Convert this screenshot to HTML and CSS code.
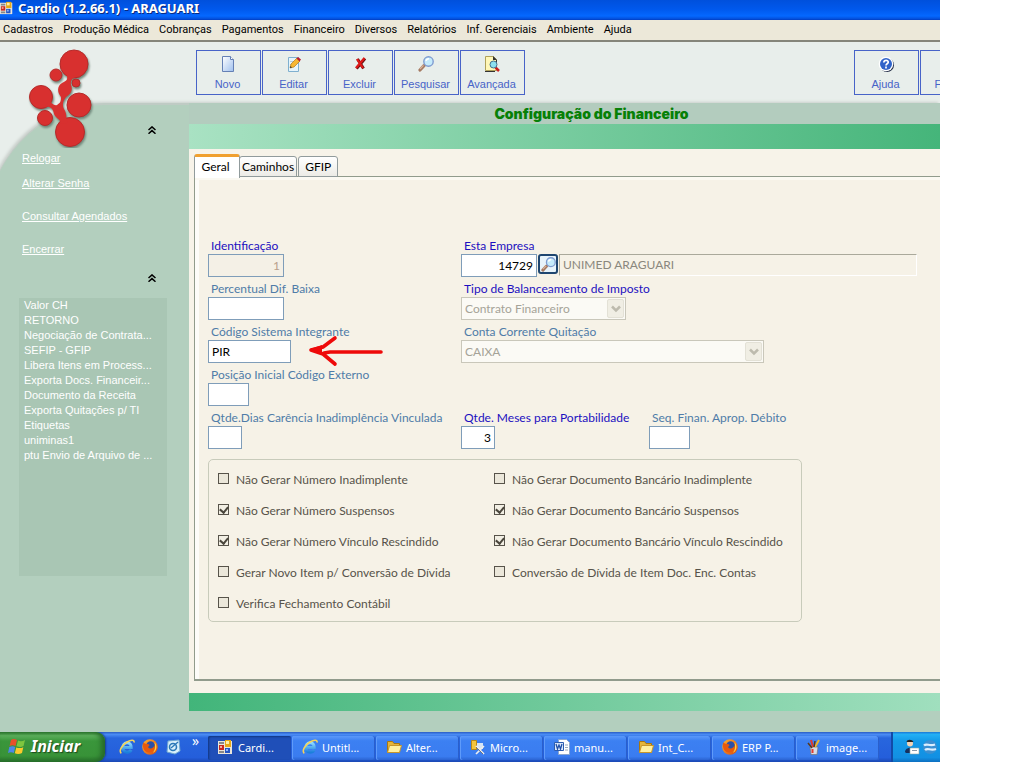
FILE: index.html
```html
<!DOCTYPE html>
<html lang="pt-BR">
<head>
<meta charset="utf-8">
<title>Cardio (1.2.66.1) - ARAGUARI</title>
<link rel="stylesheet" href="styles.css">
</head>
<body>
<svg class="defs" aria-hidden="true">
  <defs>
    <linearGradient id="foxg" x1="0" y1="0" x2="1" y2="1"><stop offset="0" stop-color="#ffb52e"/><stop offset="1" stop-color="#d9480f"/></linearGradient>
    <linearGradient id="pageg" x1="0" y1="0" x2="1" y2="1"><stop offset="0" stop-color="#fff"/><stop offset="1" stop-color="#9fc0ee"/></linearGradient>
    <linearGradient id="ieg" x1="0" y1="0" x2="0" y2="1"><stop offset="0" stop-color="#8fdcff"/><stop offset="1" stop-color="#1c7fdc"/></linearGradient>
    <symbol id="app" viewBox="0 0 16 16"><path fill="#e9e5da" d="M0 2h14v13H0z"/><path fill="#c9281f" d="M1 6h5v5H1z"/><path fill="#f5a59b" d="M2 7h2v2H2z"/><path fill="#2456c4" d="M7 9h5v5H7z"/><path fill="#8fb2f5" d="M8 10h2v2H8z"/><path fill="#e6a817" d="M7 1h6v7H7z"/><path fill="#fff0a8" d="M8 2h3v3H8z"/><path fill="#888" d="M1 12h5v2H1zM1 3h5v2H1z"/></symbol>
    <symbol id="ie" viewBox="0 0 16 16"><path fill="none" stroke="url(#ieg)" stroke-width="3" d="M4 8.6h8.2C12.300 5.500 10.500 3.800 8.200 3.800C5.600 3.800 3.700 5.900 3.700 8.600C3.700 11.300 5.700 13.200 8.200 13.200C10 13.200 11.400 12.400 12.200 11"/><path fill="none" stroke="#f5d35b" stroke-width="1.600" d="M2.300 14.300C-.5 12 3 6 8 3C12 .6 15.500.4 15 3.500"/></symbol>
    <symbol id="fox" viewBox="0 0 16 16"><circle cx="8" cy="8" r="7.800" fill="url(#foxg)"/><circle cx="8.600" cy="6.500" r="4.200" fill="#2b4fa8"/><path fill="#e8590c" d="M1.200 3.500C3 5 4.500 4.700 6.500 5.300C8.500 6 6.800 7.300 6 8C8 10.800 11.500 9.500 12.500 6C13.500 11 10 14 6.500 13.500C2.500 13 0 9 1.200 3.500z"/><path fill="#ffd43b" d="M12.500 3.500C15.500 6 15 12 11 13.800C13.500 10.500 13.500 7 12.500 3.500z"/></symbol>
    <symbol id="folder" viewBox="0 0 16 16"><path fill="#e5b53a" stroke="#a87710" d="M1.500 13.500v-11h5l1.500 2h5.500v9z"/><path fill="#fff0a0" stroke="#c7962a" d="M3.500 6.500h12l-2 7h-12z"/></symbol>
    <symbol id="lens" viewBox="0 0 16 16"><path stroke="#a57a62" stroke-width="3.200" stroke-linecap="round" d="M2 14l4-4.300"/><path stroke="#d8b49c" stroke-width="1.200" d="M2 13l3.500-3.600"/><circle cx="10.500" cy="5.500" r="4.700" fill="#c5ebfb" stroke="#7e9bd0" stroke-width="1.400"/><path fill="none" stroke="#fff" stroke-width="1.600" d="M8 5a3 3 0 0 1 3-2.300"/></symbol>
    <symbol id="chev" viewBox="0 0 8 8"><path fill="none" stroke="#000" stroke-width="1.500" d="M.5 4L4 .9L7.500 4M.5 7.700L4 4.600L7.500 7.700"/></symbol>
    <symbol id="down" viewBox="0 0 10 8"><path fill="none" stroke="#bdbbae" stroke-width="2.500" d="M1 1.500L5 5.500L9 1.500"/></symbol>
  </defs>
</svg>
<div class="desktop">
  <header class="titlebar"><svg class="i16"><use href="#app"/></svg><span>Cardio (1.2.66.1) - ARAGUARI</span></header>
  <nav class="menubar">
    <a href="#">Cadastros</a><a href="#">Produção Médica</a><a href="#">Cobranças</a><a href="#">Pagamentos</a><a href="#">Financeiro</a><a href="#">Diversos</a><a href="#">Relatórios</a><a href="#">Inf. Gerenciais</a><a href="#">Ambiente</a><a href="#">Ajuda</a>
  </nav>
  <div class="shell">
    <aside class="sidebar">
      <svg class="logo" viewBox="0 0 68 100">
        <g class="shade">
        <circle cx="46" cy="16" r="14"/><circle cx="28" cy="27" r="6"/><circle cx="48" cy="35" r="4"/><circle cx="13" cy="49" r="11.500"/><circle cx="51" cy="57" r="12"/><circle cx="17" cy="70" r="7.500"/><circle cx="42" cy="84" r="14.500"/>
        <path d="M38 26C41 32 38 33 34 35C29 38 29 44 33 49C33 54 32 55 29 57C26 58 23 55 21 52L17 59C22 58 25 60 26 66C28 71 32 70 33 76L40 75C37 71 40 67 36 61C34 57 35 53 38 49C43 46 45 42 43 37C42 33 44 30 49 28Z"/>
        </g>
      </svg>
      <button class="collapse" aria-label="Recolher menu"><svg><use href="#chev"/></svg></button>
      <nav class="links">
        <a href="#">Relogar</a><a href="#">Alterar Senha</a><a href="#" class="apart">Consultar Agendados</a><a href="#" class="apart">Encerrar</a>
      </nav>
      <button class="collapse" aria-label="Recolher lista"><svg><use href="#chev"/></svg></button>
      <ul class="recent">
        <li>Valor CH</li><li>RETORNO</li><li>Negociação de Contrata...</li><li>SEFIP - GFIP</li><li>Libera Itens em Process...</li><li>Exporta Docs. Financeir...</li><li>Documento da Receita</li><li>Exporta Quitações p/ TI</li><li>Etiquetas</li><li>uniminas1</li><li>ptu Envio de Arquivo de ...</li>
      </ul>
    </aside>
    <main class="main">
      <div class="toolbar">
        <button><svg class="i16" viewBox="0 0 16 16"><path fill="url(#pageg)" stroke="#6480b5" d="M2.500.5h8l3 3v12h-11z"/><path fill="#fff" stroke="#6480b5" d="M10.500.5v3h3"/></svg>Novo</button>
        <button><svg class="i16" viewBox="0 0 16 16"><path fill="#e6f4fb" stroke="#7fb0cf" d="M2.500 1.500h10v14h-10z"/><path stroke="#b5cbd9" d="M4 5.500h4M4 8.500h3"/><path fill="#f7b733" stroke="#b37a1d" stroke-width=".7" d="M4 12l1-4 6-6 3 3-6 6z"/><path fill="#b81d35" d="M10.500 2.500L12 1l3 2.500-1.500 2z"/><path fill="#333" d="M4 12l.5-2 1.500 1.500z"/></svg>Editar</button>
        <button><svg class="i16" viewBox="0 0 16 16"><path stroke="#6b1010" stroke-width="3" d="M4.500 12.500L13 2.500M5.500 3l6 9.500"/><path stroke="#e01818" stroke-width="2.200" d="M4 12L12.500 2M5 3l6 9"/></svg>Excluir</button>
        <button><svg class="i16"><use href="#lens"/></svg>Pesquisar</button>
        <button><svg class="i16" viewBox="0 0 16 16"><path fill="#fff7b8" stroke="#b0a15a" d="M1.500.5h8l3 3v11h-11z"/><path fill="#333" d="M9 0l4 4v3h-1V4H9z"/><path stroke="#c92020" stroke-width="2.500" d="M11.500 11.500l3.500 3.500"/><circle cx="9.500" cy="8.500" r="3.500" fill="#8ce0f0" stroke="#46708f"/><path stroke="#333" d="M1 15.500h10"/></svg>Avançada</button>
        <div class="toolbar-end">
          <button><svg class="i16" viewBox="0 0 16 16"><circle cx="9" cy="9" r="7" fill="#222b45"/><circle cx="8" cy="8" r="7.300" fill="#fff"/><circle cx="8" cy="8" r="6" fill="#2f63c9"/><path fill="none" stroke="#fff" stroke-width="1.700" d="M5.800 6.500C6 3.600 10.500 3.800 10.200 6.300C10 7.800 8 7.700 8 9.500M8 10.600v1.800"/></svg>Ajuda</button>
          <button><svg class="i16" viewBox="0 0 16 16"><path fill="#a76b35" d="M3 1h9v14H3z"/></svg>Fechar</button>
        </div>
      </div>
      <h1 class="heading">Configuração do Financeiro</h1>
      <section class="card">
        <div class="tabs" role="tablist"><button role="tab" aria-selected="true" class="tab active">Geral</button><button role="tab" class="tab">Caminhos</button><button role="tab" class="tab">GFIP</button></div>
        <form class="page">
          <div class="fields">
            <div class="field req"><label for="ident">Identificação</label><input id="ident" class="w76 num" value="1" disabled></div>
            <div class="field req wide"><label for="emp">Esta Empresa</label>
              <div class="combo"><input id="emp" class="w76 num" value="14729"><button type="button" class="find" aria-label="Localizar empresa"><svg class="i16"><use href="#lens"/></svg></button><output class="company" for="emp">UNIMED ARAGUARI</output></div></div>
            <div class="field"><label for="perc">Percentual Dif. Baixa</label><input id="perc" class="w76"></div>
            <div class="field req wide"><label for="tipo">Tipo de Balanceamento de Imposto</label><div class="select w165"><select id="tipo" disabled><option>Contrato Financeiro</option></select><span class="arrow"><svg><use href="#down"/></svg></span></div></div>
            <div class="field marked"><label for="cod">Código Sistema Integrante</label><input id="cod" class="w83" value="PIR">
              <svg class="pointer" viewBox="0 0 76 32"><path fill="none" stroke="#ee0a0a" stroke-width="3.600" stroke-linecap="round" stroke-linejoin="round" d="M73 17H22L16 18M27 3L15 12L3 15L15 19L27 29"/><path fill="#ee0a0a" d="M2 14L14 10L14 19Z"/></svg></div>
            <div class="field wide"><label for="conta">Conta Corrente Quitação</label><div class="select w303"><select id="conta" disabled><option>CAIXA</option></select><span class="arrow"><svg><use href="#down"/></svg></span></div></div>
            <div class="field full"><label for="pos">Posição Inicial Código Externo</label><input id="pos" class="w41"></div>
            <div class="field"><label for="dias">Qtde.Dias Carência Inadimplência Vinculada</label><input id="dias" class="w34"></div>
            <div class="field req"><label for="meses">Qtde. Meses para Portabilidade</label><input id="meses" class="w34 num" value="3"></div>
            <div class="field"><label for="seq">Seq. Finan. Aprop. Débito</label><input id="seq" class="w41"></div>
          </div>
          <div class="options">
            <label><input type="checkbox">Não Gerar Número Inadimplente</label>
            <label><input type="checkbox">Não Gerar Documento Bancário Inadimplente</label>
            <label><input type="checkbox" checked>Não Gerar Número Suspensos</label>
            <label><input type="checkbox" checked>Não Gerar Documento Bancário Suspensos</label>
            <label><input type="checkbox" checked>Não Gerar Número Vínculo Rescindido</label>
            <label><input type="checkbox" checked>Não Gerar Documento Bancário Vínculo Rescindido</label>
            <label><input type="checkbox">Gerar Novo Item p/ Conversão de Dívida</label>
            <label><input type="checkbox">Conversão de Dívida de Item Doc. Enc. Contas</label>
            <label><input type="checkbox">Verifica Fechamento Contábil</label>
          </div>
        </form>
      </section>
    </main>
  </div>
  <footer class="taskbar">
    <button class="start"><svg viewBox="0 0 20 18"><path fill="#e8502a" d="M4 3C6 1.500 8 2 10 3L8.500 9C6.500 8 4.500 8 2.500 9z"/><path fill="#7ec63f" d="M11 3.500C13 4.500 15.500 4.500 18 3L16.500 9C14.500 10.200 12 10.200 9.500 9.200z"/><path fill="#4d86ea" d="M2.300 10C4.500 9 6.500 9 8.200 10L6.800 16C5 15 3 15 1 16z"/><path fill="#fbc92b" d="M9.300 10.400C11.500 11.300 14 11.300 16.300 10.200L15 16C12.500 17.400 10 17.300 7.800 16.300z"/></svg>Iniciar</button>
    <div class="quick">
      <button aria-label="Internet Explorer"><svg class="i16"><use href="#ie"/></svg></button>
      <button aria-label="Firefox"><svg class="i16"><use href="#fox"/></svg></button>
      <button aria-label="Área de trabalho"><svg class="i16" viewBox="0 0 16 16"><path fill="#d8f0fb" stroke="#6fa8d0" d="M3 2l11-1 1 11-5 3-8-2z"/><circle cx="8" cy="8" r="3.500" fill="none" stroke="#2a78b8" stroke-width="1.600"/><path stroke="#2a78b8" stroke-width="1.300" d="M6 9l7-6"/></svg></button>
      <span class="more">»</span>
    </div>
    <div class="tasks">
      <button class="on"><svg class="i16"><use href="#app"/></svg>Cardi...</button>
      <button><svg class="i16"><use href="#ie"/></svg>Untitl...</button>
      <button><svg class="i16"><use href="#folder"/></svg>Alter...</button>
      <button><svg class="i16" viewBox="0 0 16 16"><path fill="#f4c53d" stroke="#b98914" d="M1.500 1.500h5v9h-5z"/><path fill="#d7e4f5" d="M7 4h6v6H7z"/><path stroke="#eee" stroke-width="1.700" d="M6 7l8 8M14 7l-8 8"/><path stroke="#555" stroke-width=".7" d="M6 8l7 7"/></svg>Micro...</button>
      <button><svg class="i16" viewBox="0 0 16 16"><path fill="#fff" stroke="#8ba7cf" d="M4.500.5h8l3 3v12h-11z"/><path fill="#dbe8fa" stroke="#2c5db0" d="M.5 3.500h9v8h-9z"/><path fill="none" stroke="#2150a8" stroke-width="1.300" d="M2 5l1.500 5L5 6l1.500 4L8 5"/><path stroke="#9ab" d="M11 6h3M11 8.500h3M11 11h3"/></svg>manu...</button>
      <button><svg class="i16"><use href="#folder"/></svg>Int_C...</button>
      <button><svg class="i16"><use href="#fox"/></svg>ERP P...</button>
      <button><svg class="i16" viewBox="0 0 16 16"><path fill="#d8dce6" stroke="#777" stroke-width=".7" d="M4 8h8l-1 7.500H5z"/><path stroke="#e23b2e" stroke-width="2" d="M5 1l2 7"/><path stroke="#f0b52a" stroke-width="2" d="M13 1L9 8"/><path stroke="#5a3a1a" stroke-width="1.500" d="M9 2L8 8M2 4l4 5"/><path stroke="#e23b2e" stroke-width="2" d="M6.500 10v4"/></svg>image...</button>
    </div>
    <div class="tray">
      <svg class="i16" viewBox="0 0 16 16"><circle cx="6" cy="4.500" r="3" fill="#f3d3b5"/><path fill="#222" d="M2.500 3C3 0 8 0 9.500 3z"/><path fill="#16305e" d="M1 13C1 8 10 7 11 12v2H2z"/><path fill="#fff" stroke="#8aa" stroke-width=".6" d="M6 9h9v6H6z"/><path stroke="#89a" d="M8 11.500h5"/></svg>
      <svg class="i16" viewBox="0 0 16 16"><circle cx="8" cy="8" r="7" fill="#3b8fd2"/><path fill="none" stroke="#dcefff" stroke-width="2.200" d="M2 6.500c3-3 5 1.500 11-1M3 11c3-3 5 1.500 11-1"/></svg>
    </div>
  </footer>
</div>
</body>
</html>
```

FILE: styles.css
```css
* { box-sizing: border-box; }
body { margin: 0; padding-right: 84px; background: #fff; font-family: "Liberation Sans", Arial, sans-serif; font-size: 11px; color: #000; }
button { font: inherit; color: inherit; border: 0; padding: 0; margin: 0; background: none; }
svg { display: block; flex: none; }
.defs { position: absolute; width: 0; height: 0; }
.i16 { width: 16px; height: 16px; }
.desktop { min-height: calc(100vh - 6px); display: flex; flex-direction: column; overflow: hidden; }

.titlebar { height: 20px; display: flex; align-items: center; gap: 4px; padding: 0 0 4px; background: linear-gradient(#0050dc, #0058ec 45%, #0468ff 80%, #0450dc 94%, #003cc0); color: #fff; font: bold 13px/16px "Noto Sans", sans-serif; text-shadow: 1px 1px #0a2a80; }
.titlebar .i16 { width: 14px; }
.menubar { height: 22px; display: flex; gap: 10px; padding: 0 3px; background: #ece8d9; border-bottom: 2px solid #85857a; font: 11px/19px Roboto, sans-serif; }
.menubar a { color: #000; text-decoration: none; }

.shell { flex: 1; position: relative; z-index: 0; display: grid; grid-template-columns: 189px minmax(0, 1fr); background: #e8eeeb; overflow: hidden; }
.shell::before { content: ""; position: absolute; z-index: -1; top: 61px; right: 0; bottom: 0; left: -15px; background: #b3cfbe; border-top: 2px solid #bfcbc4; border-top-left-radius: 120px 130px; box-shadow: -2px -1px 3px #c9cfcb; }

.sidebar { padding-top: 6px; }
.logo { width: 68px; height: 100px; margin-left: 28px; }
.logo .shade { fill: #d8302f; stroke: #b52b2b; stroke-width: 1; filter: drop-shadow(1px 2px 1px #6e8578); }
.logo path { stroke: none; }
.collapse { display: block; margin-left: 148px; }
.logo + .collapse { margin-top: -22px; }
.collapse svg { width: 8px; height: 8px; }
.links { display: flex; flex-direction: column; align-items: flex-start; gap: 9px; padding: 16px 0 17px 22px; line-height: 16px; }
.links a { color: #fff; }
.links .apart { margin-top: 8px; }
.recent { list-style: none; margin: 16px 22px 0 19px; padding: 0 5px; min-height: 278px; background: #a9c6b4; color: #fff; line-height: 15px; white-space: nowrap; }

.main { display: flex; flex-direction: column; min-width: 0; }
.toolbar { display: flex; gap: 1px; padding: 8px 0 8px 7px; overflow: hidden; }
.toolbar button { flex: none; width: 65px; height: 45px; display: flex; flex-direction: column; align-items: center; gap: 6px; padding: 5px 2px 0 0; border: 1px solid #4763c8; color: #4763c8; line-height: 12px; }
.toolbar-end { display: flex; gap: 1px; margin: 0 -45px 0 auto; }
.heading { margin: 0; padding: 2px 0 0 54px; height: 21px; background: #b3ccbe; color: #078007; text-align: center; font: 900 14px/18px Inter, "DejaVu Sans", sans-serif; }
.card { flex: 1; margin-bottom: 21px; padding: 30px 0 30px 5px; background: linear-gradient(90deg, #a9e2c3, #45b57a) top / 100% 25px no-repeat, linear-gradient(90deg, #42b57a, #a0dfbe) bottom / 100% 18px no-repeat, #f7f3e9; display: flex; flex-direction: column; font-family: Lato, sans-serif; font-size: 12px; }

.tabs { display: flex; align-items: flex-end; height: 23px; position: relative; margin-bottom: -1px; }
.tab { height: 21px; margin-right: 1px; padding: 0 2px; border: 1px solid #919b9c; border-radius: 3px 3px 0 0; background: linear-gradient(#fff, #ecebe6); }
.tab:last-child { padding: 0 6px; }
.tab.active { height: 24px; width: 46px; margin: 0 -1px -1px 0; padding: 0 3px 3px 0; border-top: 3px solid #f0a030; border-bottom: 0; background: #fff; }
.page { flex: 1; margin: 0; padding: 61px 0 54px 13px; border: solid #919b8c; border-width: 1px 0 2px 1px; background: linear-gradient(90deg, #fdfcf9 4px, #f6f2e7 4px); box-shadow: inset 0 3px #fbf9f2; }

.fields { display: grid; grid-template-columns: 253px 188px minmax(0, 1fr); row-gap: 4px; }
.field { display: flex; flex-direction: column; align-items: flex-start; color: #4f7ca8; white-space: nowrap; min-width: 0; }
.field > label { line-height: 16px; padding-left: 3px; }
.req { color: #1c10c0; }
.wide { grid-column: 2 / -1; }
.full { grid-column: 1 / -1; }
.field input { height: 23px; padding: 0 3px; border: 1px solid #7f9db9; border-radius: 0; background: #fff; font: inherit; color: #000; }
.field input:disabled { background: #f4f0e6; color: #b8a08c; }
.field .num { text-align: right; }
.w76 { width: 76px; } .w83 { width: 83px; } .w41 { width: 41px; } .w34 { width: 34px; } .w165 { width: 165px; } .w303 { width: 303px; }
.combo { display: flex; gap: 1px; align-self: stretch; padding-right: 23px; }
.find { width: 20px; height: 20px; display: grid; place-items: center; border: 2px solid #1f4670; border-radius: 3px; background: #e8f4fb; }
.find svg { width: 15px; height: 15px; }
.company { flex: 1; height: 22px; padding-left: 3px; line-height: 20px; border: 1px solid #aaa99b; border-right-color: #fff; border-bottom-color: #fff; color: #8a877d; }
.select { display: flex; height: 23px; padding: 1px; border: 1px solid #c9c7ba; background: #fbfaf5; }
.select select { flex: 1; min-width: 0; appearance: none; border: 0; padding: 0 2px; background: none; font: inherit; color: #a5a398; opacity: 1; }
.arrow { width: 17px; display: grid; place-items: center; border: 1px solid #e3e1d6; border-radius: 2px; background: #f0eee4; }
.arrow svg { width: 10px; height: 8px; }
.marked { position: relative; }
.pointer { position: absolute; top: 11px; left: 100px; width: 76px; height: 32px; }

.options { display: grid; grid-template-columns: 276px 1fr; grid-auto-rows: 31px; width: 594px; max-width: 100%; margin-top: 10px; padding: 4px 9px 2px; border: 1px solid #c8cbbb; border-radius: 5px; color: #57534a; white-space: nowrap; }
.options label { display: flex; align-items: center; gap: 7px; }
.options input { appearance: none; flex: none; width: 11px; height: 11px; margin: 0 0 2px; border: 1px solid #57534a; background: #ebe7da; }
.options input:checked { background: #f2efe4; }
.options input:checked::before { content: ""; display: block; width: 4px; height: 6px; margin: 0 auto; border: solid #4a463c; border-width: 0 2px 2px 0; transform: rotate(40deg); }

.taskbar { height: 30px; display: flex; background: linear-gradient(#2a5cc4, #4a8cf4 8%, #2866de 20%, #245edb 85%, #1b48b4); color: #fff; font: 11px "Noto Sans", sans-serif; }
.start { width: 105px; display: flex; align-items: center; gap: 4px; padding: 0 0 2px 7px; border-radius: 0 9px 9px 0; background: linear-gradient(#2f7d31, #5cb05c 12%, #3a963b 30%, #389238 80%, #27702a); box-shadow: inset -4px 0 5px #276b2a, 1px 0 2px #153e90; font: italic bold 16px "Noto Sans", sans-serif; text-shadow: 1px 1px 1px #1d4a1d; }
.start svg { width: 20px; height: 18px; }
.quick { width: 103px; display: flex; align-items: center; gap: 7px; padding-left: 14px; }
.more { align-self: flex-start; margin-left: 4px; font-size: 14px; line-height: 18px; }
.tasks { flex: 1; min-width: 0; display: flex; align-items: center; gap: 1px; padding: 2px 12px 0 0; }
.tasks button { flex: 1; min-width: 0; height: 24px; display: flex; align-items: center; gap: 4px; padding: 0 0 2px 10px; border-radius: 2px; background: linear-gradient(#5a98fa, #3c80f2 20%, #3a7cf0 85%, #2b64d2); box-shadow: inset 1px 0 #5f9bfa, inset -1px 0 #2a5fcc; white-space: nowrap; overflow: hidden; }
.tasks .on { background: #1f4fb8; box-shadow: inset 1px 1px 2px #123782; }
.tray { width: 49px; display: flex; align-items: center; gap: 2px; padding-left: 11px; border-left: 2px solid #124ba8; background: linear-gradient(#1a78d6, #23b0f5 8%, #139ae8 30%, #1290e3 85%, #0d6fc0); overflow: hidden; }
```
